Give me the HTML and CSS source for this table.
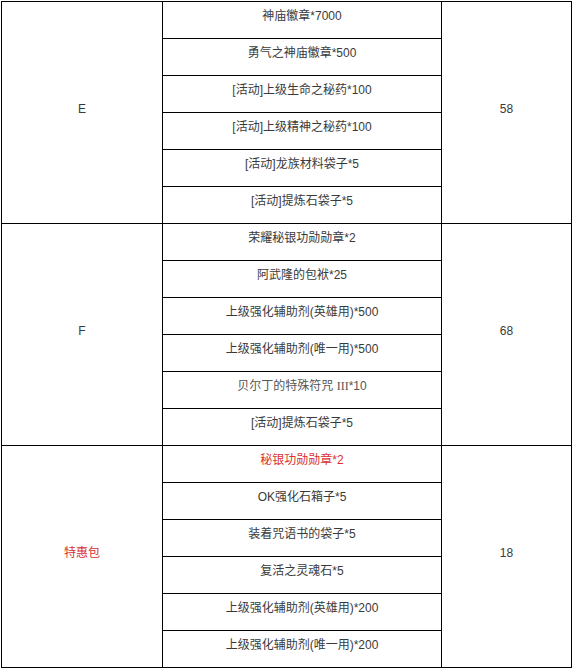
FILE: index.html
```html
<!DOCTYPE html>
<html lang="zh">
<head>
<meta charset="utf-8">
<link rel="stylesheet" href="styles.css">
</head>
<body>
<table class="rewards">
  <colgroup>
    <col class="c-tier">
    <col class="c-item">
    <col class="c-price">
  </colgroup>
  <tbody>
    <tr><td rowspan="6" class="tier">E</td><td>神庙徽章*7000</td><td rowspan="6" class="price">58</td></tr>
    <tr><td>勇气之神庙徽章*500</td></tr>
    <tr><td>[活动]上级生命之秘药*100</td></tr>
    <tr><td>[活动]上级精神之秘药*100</td></tr>
    <tr><td>[活动]龙族材料袋子*5</td></tr>
    <tr><td>[活动]提炼石袋子*5</td></tr>

    <tr><td rowspan="6" class="tier">F</td><td>荣耀秘银功勋勋章*2</td><td rowspan="6" class="price">68</td></tr>
    <tr><td>阿武隆的包袱*25</td></tr>
    <tr><td>上级强化辅助剂(英雄用)*500</td></tr>
    <tr><td>上级强化辅助剂(唯一用)*500</td></tr>
    <tr><td class="muted">贝尔丁的特殊符咒 <span class="roman">III</span>*10</td></tr>
    <tr><td>[活动]提炼石袋子*5</td></tr>

    <tr><td rowspan="6" class="tier red">特惠包</td><td class="red">秘银功勋勋章*2</td><td rowspan="6" class="price">18</td></tr>
    <tr><td>OK强化石箱子*5</td></tr>
    <tr><td>装着咒语书的袋子*5</td></tr>
    <tr><td>复活之灵魂石*5</td></tr>
    <tr><td>上级强化辅助剂(英雄用)*200</td></tr>
    <tr><td>上级强化辅助剂(唯一用)*200</td></tr>
  </tbody>
</table>
</body>
</html>
```

FILE: styles.css
```css
html, body {
  margin: 0;
  padding: 0;
  background: #fff;
}

body {
  padding: 1px 0 0 1px;
}

.rewards {
  border-collapse: collapse;
  table-layout: fixed;
  width: 570px;
  font-family: "Liberation Sans", "Noto Sans CJK SC", sans-serif;
  font-size: 12px;
  color: #3a3a3a;
}

.c-tier { width: 161px; }
.c-item { width: 279px; }
.c-price { width: 130px; }

.rewards td {
  border: 1px solid #000;
  padding: 6px 4px 14px;
  line-height: 16px;
  text-align: center;
  vertical-align: middle;
  white-space: nowrap;
}

.rewards .muted {
  color: #555;
}

.roman {
  font-family: "Liberation Serif", serif;
}

.rewards .red {
  color: #d8312e;
}
```
